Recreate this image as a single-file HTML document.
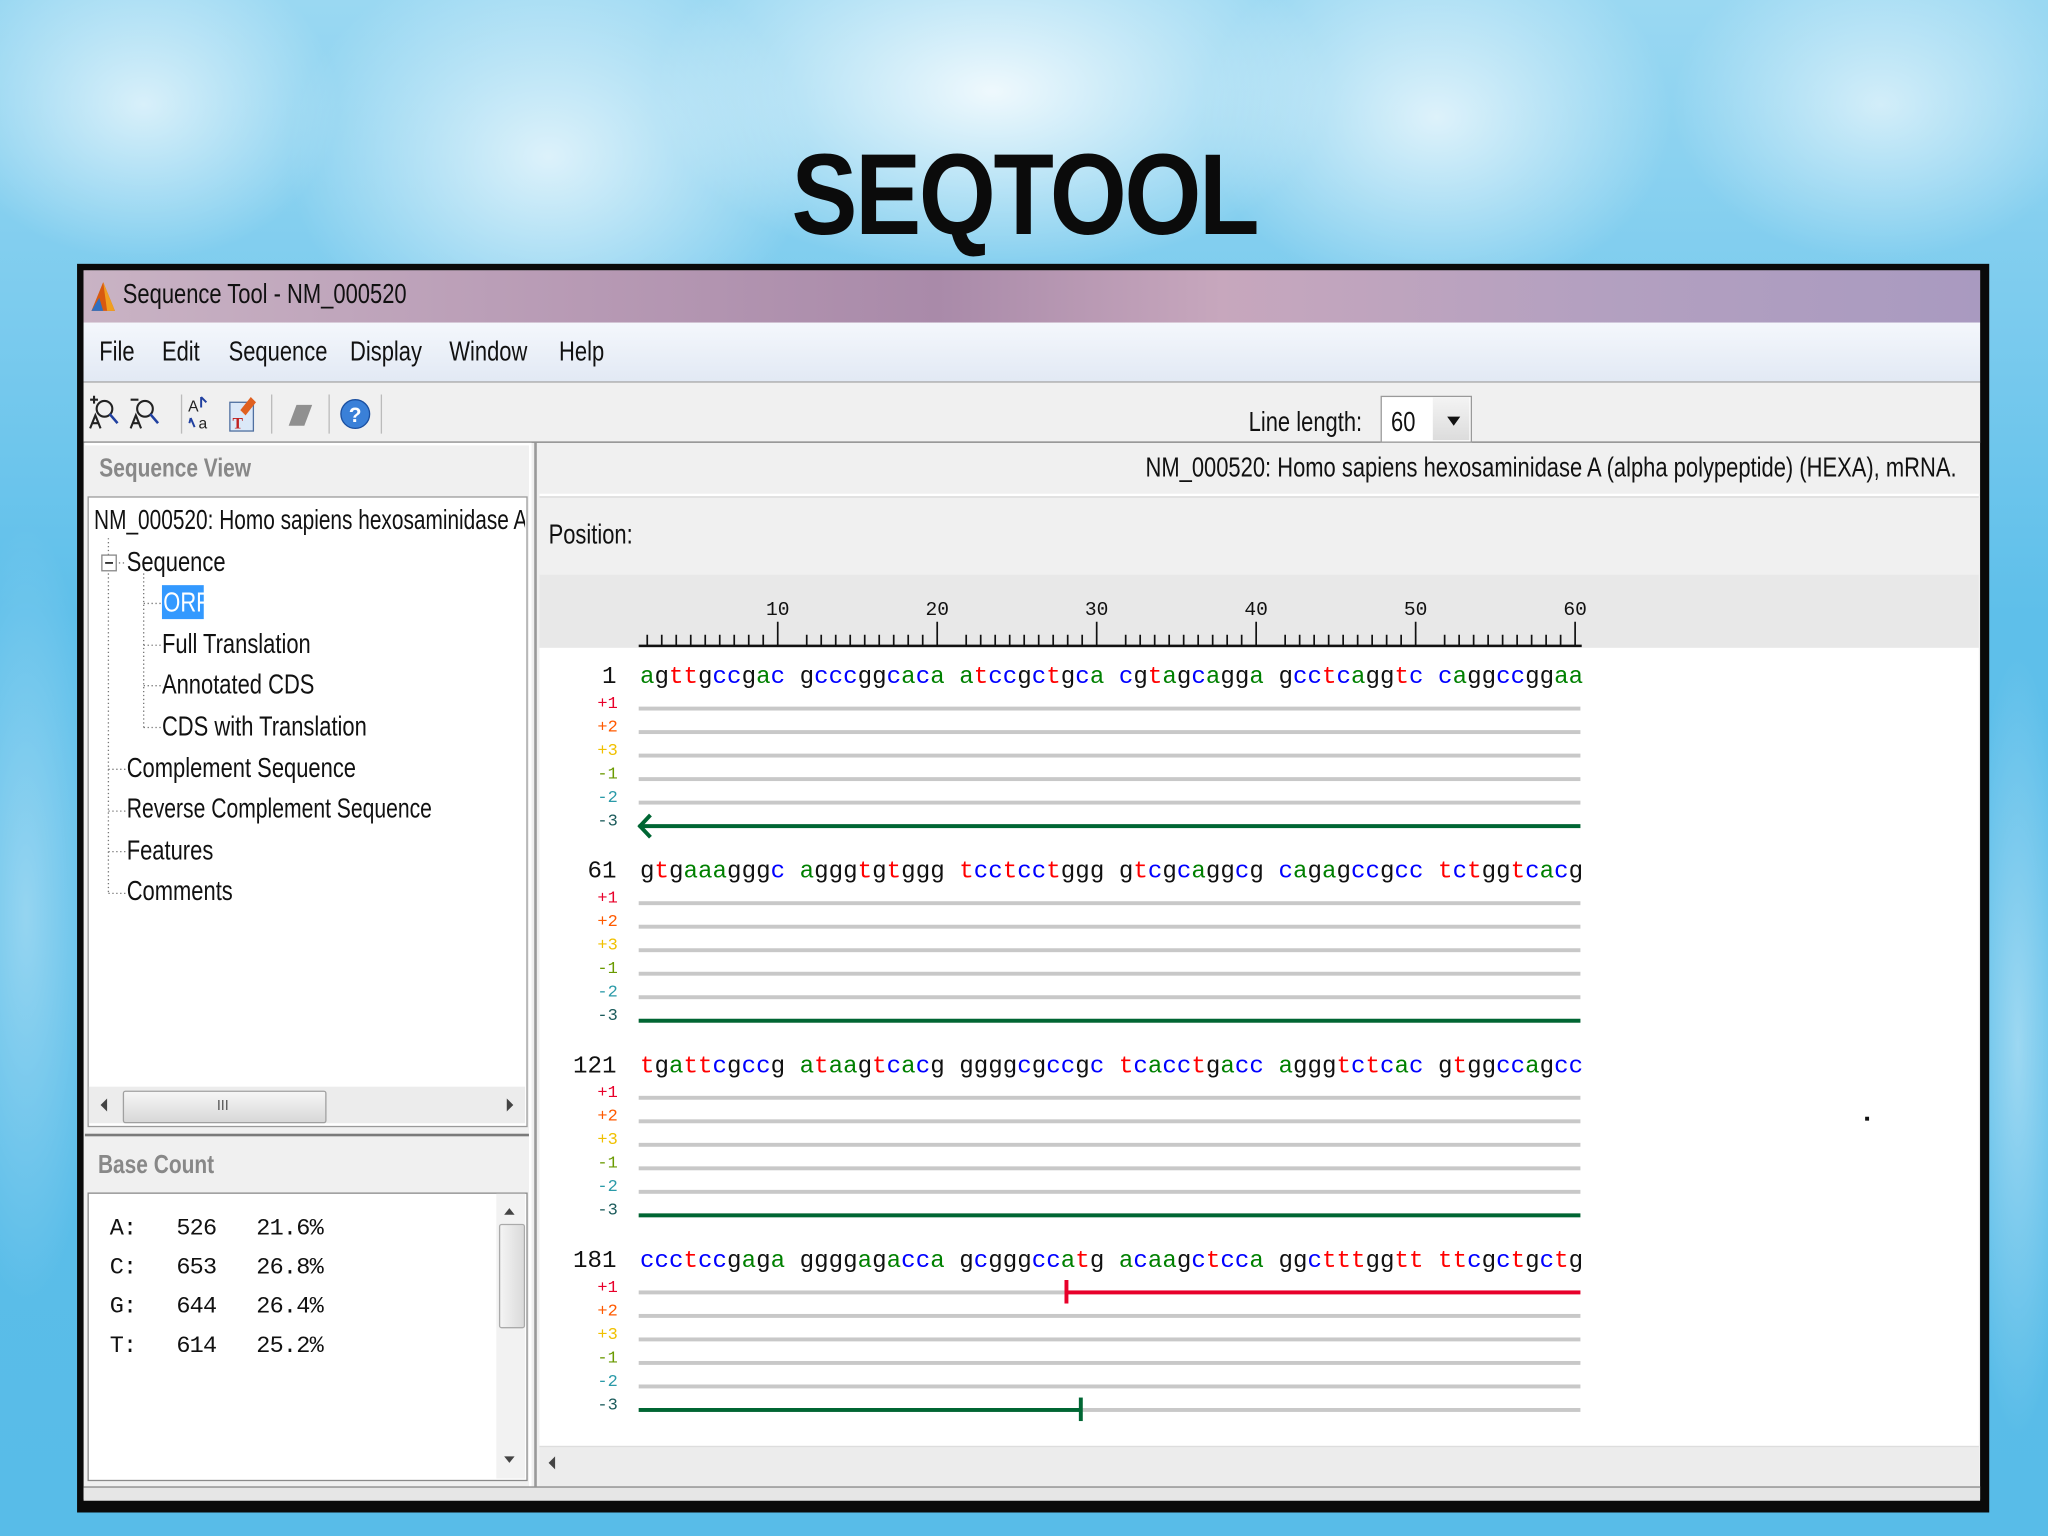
<!DOCTYPE html>
<html><head><meta charset="utf-8">
<style>
html,body{margin:0;padding:0;width:2048px;height:1536px;overflow:hidden;}
body{background:#6cc6ec;}
#w{position:absolute;left:0;top:0;width:1568px;height:1176px;transform:scale(1.306122);transform-origin:0 0;
background:
radial-gradient(ellipse 260px 140px at 760px 70px,rgba(255,255,255,.85),rgba(255,255,255,0)),
radial-gradient(ellipse 200px 160px at 420px 120px,rgba(255,255,255,.7),rgba(255,255,255,0)),
radial-gradient(ellipse 180px 140px at 1100px 90px,rgba(255,255,255,.7),rgba(255,255,255,0)),
radial-gradient(ellipse 150px 120px at 110px 80px,rgba(255,255,255,.65),rgba(255,255,255,0)),
radial-gradient(ellipse 160px 120px at 1440px 80px,rgba(255,255,255,.6),rgba(255,255,255,0)),
radial-gradient(ellipse 60px 300px at 20px 700px,rgba(255,255,255,.35),rgba(255,255,255,0)),
radial-gradient(ellipse 40px 300px at 1545px 800px,rgba(255,255,255,.4),rgba(255,255,255,0)),
linear-gradient(180deg,#9ad8f2 0%,#5ebfea 40%,#58bce8 100%);}
.a{position:absolute;}
.t{font-family:"Liberation Sans",sans-serif;color:#111;white-space:nowrap;transform:scaleX(0.8);transform-origin:0 0;}
.m{font-family:"Liberation Mono",monospace;white-space:pre;}
#title{left:0;width:1568px;top:98px;text-align:center;font:bold 88px "Liberation Sans",sans-serif;color:#0b0b0b;letter-spacing:-2px;}
#title span{display:inline-block;transform:scaleX(0.86);}
.sa{color:#008000}.sc{color:#0000ff}.sg{color:#111}.st{color:#ff0000}
.lab{font-size:13px;width:40px;text-align:right;left:433px;font-family:"Liberation Mono",monospace;}
.gl{left:489px;width:721px;height:3px;background:#c8c8c8;}
</style></head><body>
<div id="w">
<div id="title" class="a"><span>SEQTOOL</span></div>
<div class="a" style="left:59px;top:202px;width:1464px;height:956px;background:#0a0a0a;"></div>
<div class="a" style="left:64px;top:207px;width:1452px;height:941px;background:#f0f0f0;"></div>
<div class="a" style="left:64px;top:207px;width:1452px;height:40px;background:linear-gradient(90deg,#c9b3c4 0%,#b89bb5 25%,#a98aa9 45%,#c7a7bd 60%,#b3a0c0 80%,#a99ac0 100%);"></div>
<svg class="a" style="left:68px;top:214px" width="22" height="26" viewBox="0 0 22 26"><path d="M2 24 L11 2 L20 24 Z" fill="#d85a10"/><path d="M2 24 L8 14 L11 24Z" fill="#3070c0"/><path d="M11 2 L20 24 L14 24Z" fill="#f0a020"/></svg>
<div class="a t" style="left:94px;top:214px;font-size:21px;">Sequence Tool - NM_000520</div>
<div class="a" style="left:64px;top:247px;width:1452px;height:45px;background:linear-gradient(#f4f7fc,#e2e9f4);border-bottom:1px solid #a0a0a0;"></div>
<div class="a t" style="left:76px;top:258px;font-size:21px;">File</div>
<div class="a t" style="left:124px;top:258px;font-size:21px;">Edit</div>
<div class="a t" style="left:175px;top:258px;font-size:21px;">Sequence</div>
<div class="a t" style="left:268px;top:258px;font-size:21px;">Display</div>
<div class="a t" style="left:344px;top:258px;font-size:21px;">Window</div>
<div class="a t" style="left:428px;top:258px;font-size:21px;">Help</div>
<div class="a" style="left:64px;top:293px;width:1452px;height:45px;background:#f0f0f0;border-bottom:1px solid #808080;"></div>
<svg class="a" style="left:66px;top:300px" width="240" height="34" viewBox="0 0 240 34">
<g fill="none" stroke="#222" stroke-width="1.6">
<circle cx="14" cy="13" r="6"/><line x1="18" y1="17" x2="24" y2="24" stroke="#2040a0" stroke-width="2"/><path d="M3 28 L7 18 L11 28 M5 24 H9"/><path d="M3 6 h6 M6 3 v6"/>
<circle cx="45" cy="13" r="6"/><line x1="49" y1="17" x2="55" y2="24" stroke="#2040a0" stroke-width="2"/><path d="M34 28 L38 18 L42 28 M36 24 H40"/><path d="M34 6 h6"/>
</g>
<line x1="73" y1="2" x2="73" y2="32" stroke="#bbb"/>
<text x="78" y="15" font-family="Liberation Sans" font-size="12" fill="#222">A</text><text x="86" y="28" font-family="Liberation Sans" font-size="12" fill="#222">a</text>
<path d="M88 4 l4 4 M88 4 v8" stroke="#2040a0" stroke-width="1.5"/><path d="M80 20 l3 7 M80 20 l-1 4" stroke="#2040a0" stroke-width="1.5"/>
<rect x="110" y="8" width="18" height="22" fill="#dbe8f8" stroke="#5070a0"/><text x="112" y="28" font-family="Liberation Serif" font-size="12" font-weight="bold" fill="#c02020">T</text><path d="M118 14 l8 -10 l4 4 l-8 10z" fill="#e06020"/>
<line x1="142" y1="2" x2="142" y2="32" stroke="#bbb"/>
<path d="M155 26 l6 -16 h12 l-6 16z" fill="#909090"/>
<line x1="186" y1="2" x2="186" y2="32" stroke="#bbb"/>
<circle cx="206" cy="17" r="11" fill="#3a80d8" stroke="#1a4fa0"/><text x="201" y="23" font-family="Liberation Sans" font-weight="bold" font-size="16" fill="#fff">?</text>
<line x1="226" y1="2" x2="226" y2="32" stroke="#bbb"/>
</svg>
<div class="a t" style="left:956px;top:312px;font-size:21px;">Line length:</div>
<div class="a" style="left:1057px;top:303px;width:68px;height:34px;background:#fff;border:1px solid #9a9a9a;"></div>
<div class="a" style="left:1097px;top:304px;width:28px;height:33px;background:linear-gradient(#f4f4f4,#dcdcdc);"></div>
<div class="a t" style="left:1065px;top:312px;font-size:21px;">60</div>
<div class="a" style="left:1108px;top:319px;width:0;height:0;border-left:5px solid transparent;border-right:5px solid transparent;border-top:7px solid #111;"></div>
<div class="a" style="left:65px;top:339px;width:340px;height:2px;background:#fff;"></div>
<div class="a t" style="left:76px;top:348px;font-size:20px;color:#888;font-weight:bold;">Sequence View</div>
<div class="a" style="left:67px;top:380px;width:335px;height:481px;background:#fff;border:1px solid #9a9a9a;"></div>
<div class="a" style="left:68px;top:381px;width:334px;height:30px;overflow:hidden;"><div class="a t" style="left:4px;top:6px;font-size:21px;transform:scaleX(0.76);">NM_000520: Homo sapiens hexosaminidase A (alpha polypeptide)</div></div>
<svg class="a" style="left:68px;top:412px" width="300" height="280">
<g stroke="#777" stroke-dasharray="1 2" fill="none">
<path d="M15 0 V272 M15 177 H28 M15 209 H28 M15 240 H28 M15 272 H28"/>
<path d="M20 19 H28"/>
<path d="M42 27 V145 M42 50 H55 M42 82 H55 M42 113 H55 M42 145 H55"/>
</g>
<rect x="10" y="13" width="11" height="12" fill="#fff" stroke="#888"/><line x1="12.5" y1="19" x2="18.5" y2="19" stroke="#333" stroke-width="1.5"/>
</svg>
<div class="a t" style="left:97px;top:419px;font-size:21px;">Sequence</div>
<div class="a" style="left:124px;top:448px;width:32px;height:26px;background:#3399ff;"></div>
<div class="a t" style="left:125px;top:450px;font-size:21px;color:#fff;">ORF</div>
<div class="a t" style="left:124px;top:482px;font-size:21px;">Full Translation</div>
<div class="a t" style="left:124px;top:513px;font-size:21px;">Annotated CDS</div>
<div class="a t" style="left:124px;top:545px;font-size:21px;">CDS with Translation</div>
<div class="a t" style="left:97px;top:577px;font-size:21px;">Complement Sequence</div>
<div class="a t" style="left:97px;top:608px;font-size:21px;transform:scaleX(0.77);">Reverse Complement Sequence</div>
<div class="a t" style="left:97px;top:640px;font-size:21px;">Features</div>
<div class="a t" style="left:97px;top:671px;font-size:21px;">Comments</div>
<div class="a" style="left:68px;top:832px;width:334px;height:28px;background:#ececec;"></div>
<div class="a" style="left:94px;top:835px;width:154px;height:23px;background:linear-gradient(#f6f6f6,#d8d8d8);border:1px solid #a0a0a0;border-radius:2px;"></div>
<div class="a" style="left:166px;top:841px;font:11px 'Liberation Sans';color:#555;">III</div>
<div class="a" style="left:77px;top:841px;border-top:5px solid transparent;border-bottom:5px solid transparent;border-right:5px solid #444;"></div>
<div class="a" style="left:388px;top:841px;border-top:5px solid transparent;border-bottom:5px solid transparent;border-left:5px solid #444;"></div>
<div class="a" style="left:65px;top:868px;width:340px;height:2px;background:#7a7a7a;"></div>
<div class="a t" style="left:75px;top:881px;font-size:20px;color:#888;font-weight:bold;">Base Count</div>
<div class="a" style="left:67px;top:913px;width:335px;height:219px;background:#fff;border:1px solid #8a8a8a;"></div>
<div class="a m" style="left:84px;top:926px;font-size:18px;line-height:30px;color:#111;letter-spacing:-0.6px;">A:   526   21.6%
C:   653   26.8%
G:   644   26.4%
T:   614   25.2%</div>
<div class="a" style="left:380px;top:914px;width:22px;height:218px;background:#f2f2f2;"></div>
<div class="a" style="left:382px;top:937px;width:18px;height:78px;background:linear-gradient(90deg,#f4f4f4,#dadada);border:1px solid #aaa;border-radius:2px;"></div>
<div class="a" style="left:386px;top:925px;border-left:4px solid transparent;border-right:4px solid transparent;border-bottom:5px solid #444;"></div>
<div class="a" style="left:386px;top:1115px;border-left:4px solid transparent;border-right:4px solid transparent;border-top:5px solid #444;"></div>
<div class="a" style="left:405px;top:339px;width:2px;height:800px;background:#fff;"></div>
<div class="a" style="left:409px;top:339px;width:2px;height:800px;background:#9a9a9a;"></div>
<div class="a t" style="left:1498px;top:347px;font-size:21px;transform-origin:100% 0;transform:translateX(-100%) scaleX(0.8);"><span style="display:inline-block">NM_000520: Homo sapiens hexosaminidase A (alpha polypeptide) (HEXA), mRNA.</span></div>
<div class="a" style="left:413px;top:378px;width:1102px;height:2px;background:#fff;"></div>
<div class="a" style="left:413px;top:380px;width:1102px;height:60px;background:#f0f0f0;border-top:1px solid #d8d8d8;"></div>
<div class="a t" style="left:420px;top:398px;font-size:21px;">Position:</div>
<div class="a" style="left:413px;top:440px;width:1102px;height:56px;background:#e8e8e8;"></div>
<div class="a" style="left:413px;top:496px;width:1102px;height:611px;background:#fff;"></div>
<div class="a" style="left:413px;top:1107px;width:1102px;height:30px;background:#ececec;border-top:1px solid #ddd;"></div>
<div class="a" style="left:420px;top:1115px;border-top:5px solid transparent;border-bottom:5px solid transparent;border-right:5px solid #444;"></div>
<div class="a" style="left:64px;top:1138px;width:1452px;height:10px;background:#e6e6e6;border-top:1px solid #888;"></div>
<svg id="ruler" class="a" style="left:0;top:440px" width="1568" height="60"></svg>
<div id="seq"></div>
</div>
<script>
var R=document.getElementById('ruler'),s='';
var cw=11.1,x0=490;
for(var g=0;g<6;g++){for(var i=0;i<10;i++){var x=x0+(g*11+i)*cw+cw/2;var h=(i==9)?18:8;s+='<line x1="'+x+'" y1="'+(54-h)+'" x2="'+x+'" y2="54" stroke="#111" stroke-width="1.3"/>';if(i==9)s+='<text x="'+x+'" y="31" text-anchor="middle" font-family="Liberation Mono" font-size="15" fill="#111">'+(g+1)*10+'</text>';}}
s+='<line x1="489" y1="54.5" x2="1211" y2="54.5" stroke="#111" stroke-width="2"/>';
R.innerHTML=s;
var seqs=[["1","agttgccgac gcccggcaca atccgctgca cgtagcagga gcctcaggtc caggccggaa"],
["61","gtgaaagggc agggtgtggg tcctcctggg gtcgcaggcg cagagccgcc tctggtcacg"],
["121","tgattcgccg ataagtcacg ggggcgccgc tcacctgacc agggtctcac gtggccagcc"],
["181","ccctccgaga ggggagacca gcgggccatg acaagctcca ggctttggtt ttcgctgctg"]];
var labs=[["+1","#e8002a"],["+2","#ff5a00"],["+3","#f0c000"],["-1","#6a9a00"],["-2","#2a9aa8"],["-3","#1a5a5a"]];
var out='';
for(var b=0;b<4;b++){var y=508+b*149;
out+='<div class="a m" style="left:420px;top:'+y+'px;width:52px;text-align:right;font-size:18.5px;color:#111">'+seqs[b][0]+'</div>';
var t=seqs[b][1].replace(/[acgt]/g,function(c){return '<span class="s'+c+'">'+c+'</span>'});
out+='<div class="a m" style="left:490px;top:'+y+'px;font-size:18.5px">'+t+'</div>';
for(var k=0;k<6;k++){var ly=y+23+k*18;
out+='<div class="a lab" style="top:'+ly+'px;color:'+labs[k][1]+'">'+labs[k][0]+'</div>';
var gy=y+33+k*18;
out+='<div class="a gl" style="top:'+gy+'px"></div>';}
var gy3=y+33+5*18;
if(b<3){out+='<div class="a" style="left:489px;top:'+gy3+'px;width:721px;height:3px;background:#006633"></div>';}
if(b==0){out+='<svg class="a" style="left:486px;top:'+(gy3-9)+'px" width="20" height="20"><path d="M12 2 L4 10.5 L12 19" stroke="#006633" stroke-width="3" fill="none"/></svg>';}
if(b==3){out+='<div class="a" style="left:816px;top:'+(y+33)+'px;width:394px;height:3px;background:#e8002a"></div><div class="a" style="left:815px;top:'+(y+25)+'px;width:3px;height:18px;background:#e8002a"></div>';
out+='<div class="a" style="left:489px;top:'+gy3+'px;width:338px;height:3px;background:#006633"></div><div class="a" style="left:826px;top:'+(gy3-8)+'px;width:3px;height:18px;background:#006633"></div>';}
}
out+='<div class="a" style="left:1428px;top:855px;width:3px;height:3px;background:#111"></div>';
document.getElementById('seq').innerHTML=out;
</script>
</body></html>
